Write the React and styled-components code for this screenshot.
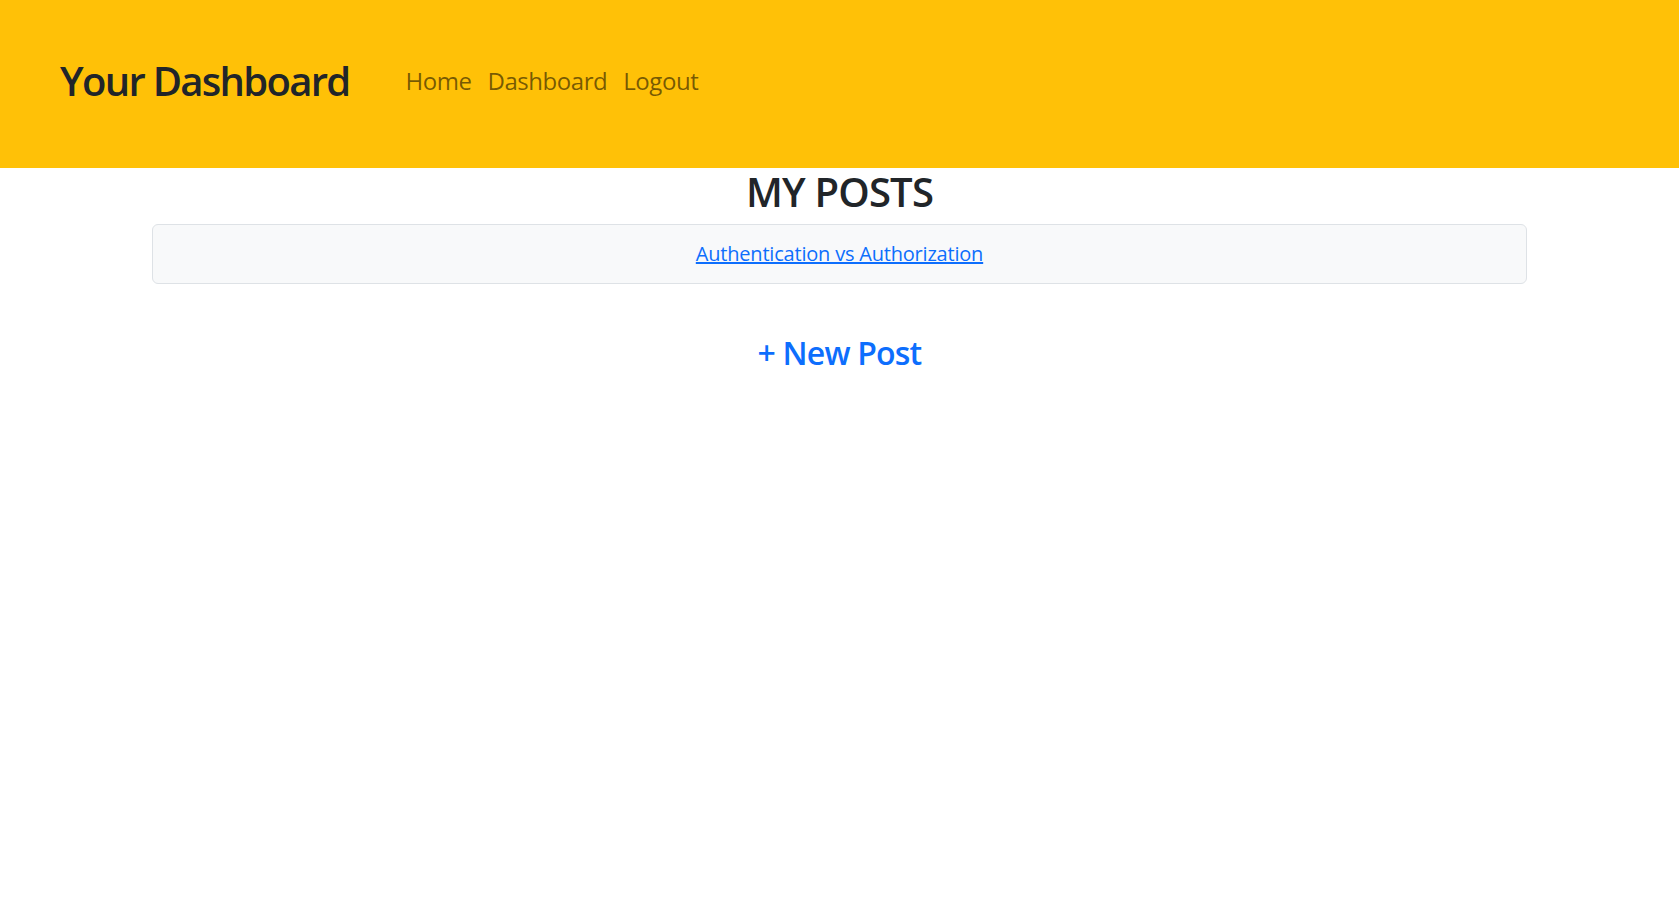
import React from "react";
import styled, { createGlobalStyle } from "styled-components";

const GlobalStyle = createGlobalStyle`
  * { box-sizing: border-box; }
  body {
    margin: 0;
    background: #ffffff;
    color: #212529;
    font-family: "Open Sans", "Noto Sans", sans-serif;
    font-size: 16px;
    line-height: 1.5;
  }
`;

const Header = styled.header`
  background: #ffc107;
  height: 168px;
  display: flex;
  align-items: center;
  padding: 0 60px 6px;
`;

const Brand = styled.h1`
  margin: 0;
  font-size: 40px;
  font-weight: 600;
  line-height: 1.2;
  color: #212529;
  letter-spacing: -1.7px;
`;

const Nav = styled.nav`
  display: flex;
  gap: 16px;
  margin-left: 56px;
`;

const NavLink = styled.a`
  font-size: 24px;
  font-weight: 500;
  line-height: 1.2;
  color: rgba(0, 0, 0, 0.55);
  text-decoration: none;
  letter-spacing: -0.45px;
`;

const Main = styled.main`
  margin: 0 152px;
  display: flex;
  flex-direction: column;
  align-items: stretch;
`;

const Title = styled.h1`
  margin: 0 0 8px;
  font-size: 40px;
  font-weight: 600;
  line-height: 1.2;
  text-align: center;
  letter-spacing: -0.8px;
`;

const PostCard = styled.div`
  background: #f8f9fa;
  border: 1px solid #dee2e6;
  border-radius: 6px;
  padding: 14px 16px;
  text-align: center;
`;

const PostLink = styled.a`
  font-size: 20px;
  font-weight: 500;
  color: #0d6efd;
  text-decoration: underline;
  letter-spacing: -0.2px;
`;

const NewPost = styled.a`
  align-self: center;
  margin-top: 50px;
  font-size: 32px;
  font-weight: 600;
  line-height: 1.2;
  color: #0d6efd;
  text-decoration: none;
  letter-spacing: -0.8px;
`;

export default function App() {
  return (
    <>
      <GlobalStyle />
      <Header>
        <Brand>Your Dashboard</Brand>
        <Nav>
          <NavLink href="#">Home</NavLink>
          <NavLink href="#">Dashboard</NavLink>
          <NavLink href="#">Logout</NavLink>
        </Nav>
      </Header>
      <Main>
        <Title>MY POSTS</Title>
        <PostCard>
          <PostLink href="#">Authentication vs Authorization</PostLink>
        </PostCard>
        <NewPost href="#">+ New Post</NewPost>
      </Main>
    </>
  );
}
